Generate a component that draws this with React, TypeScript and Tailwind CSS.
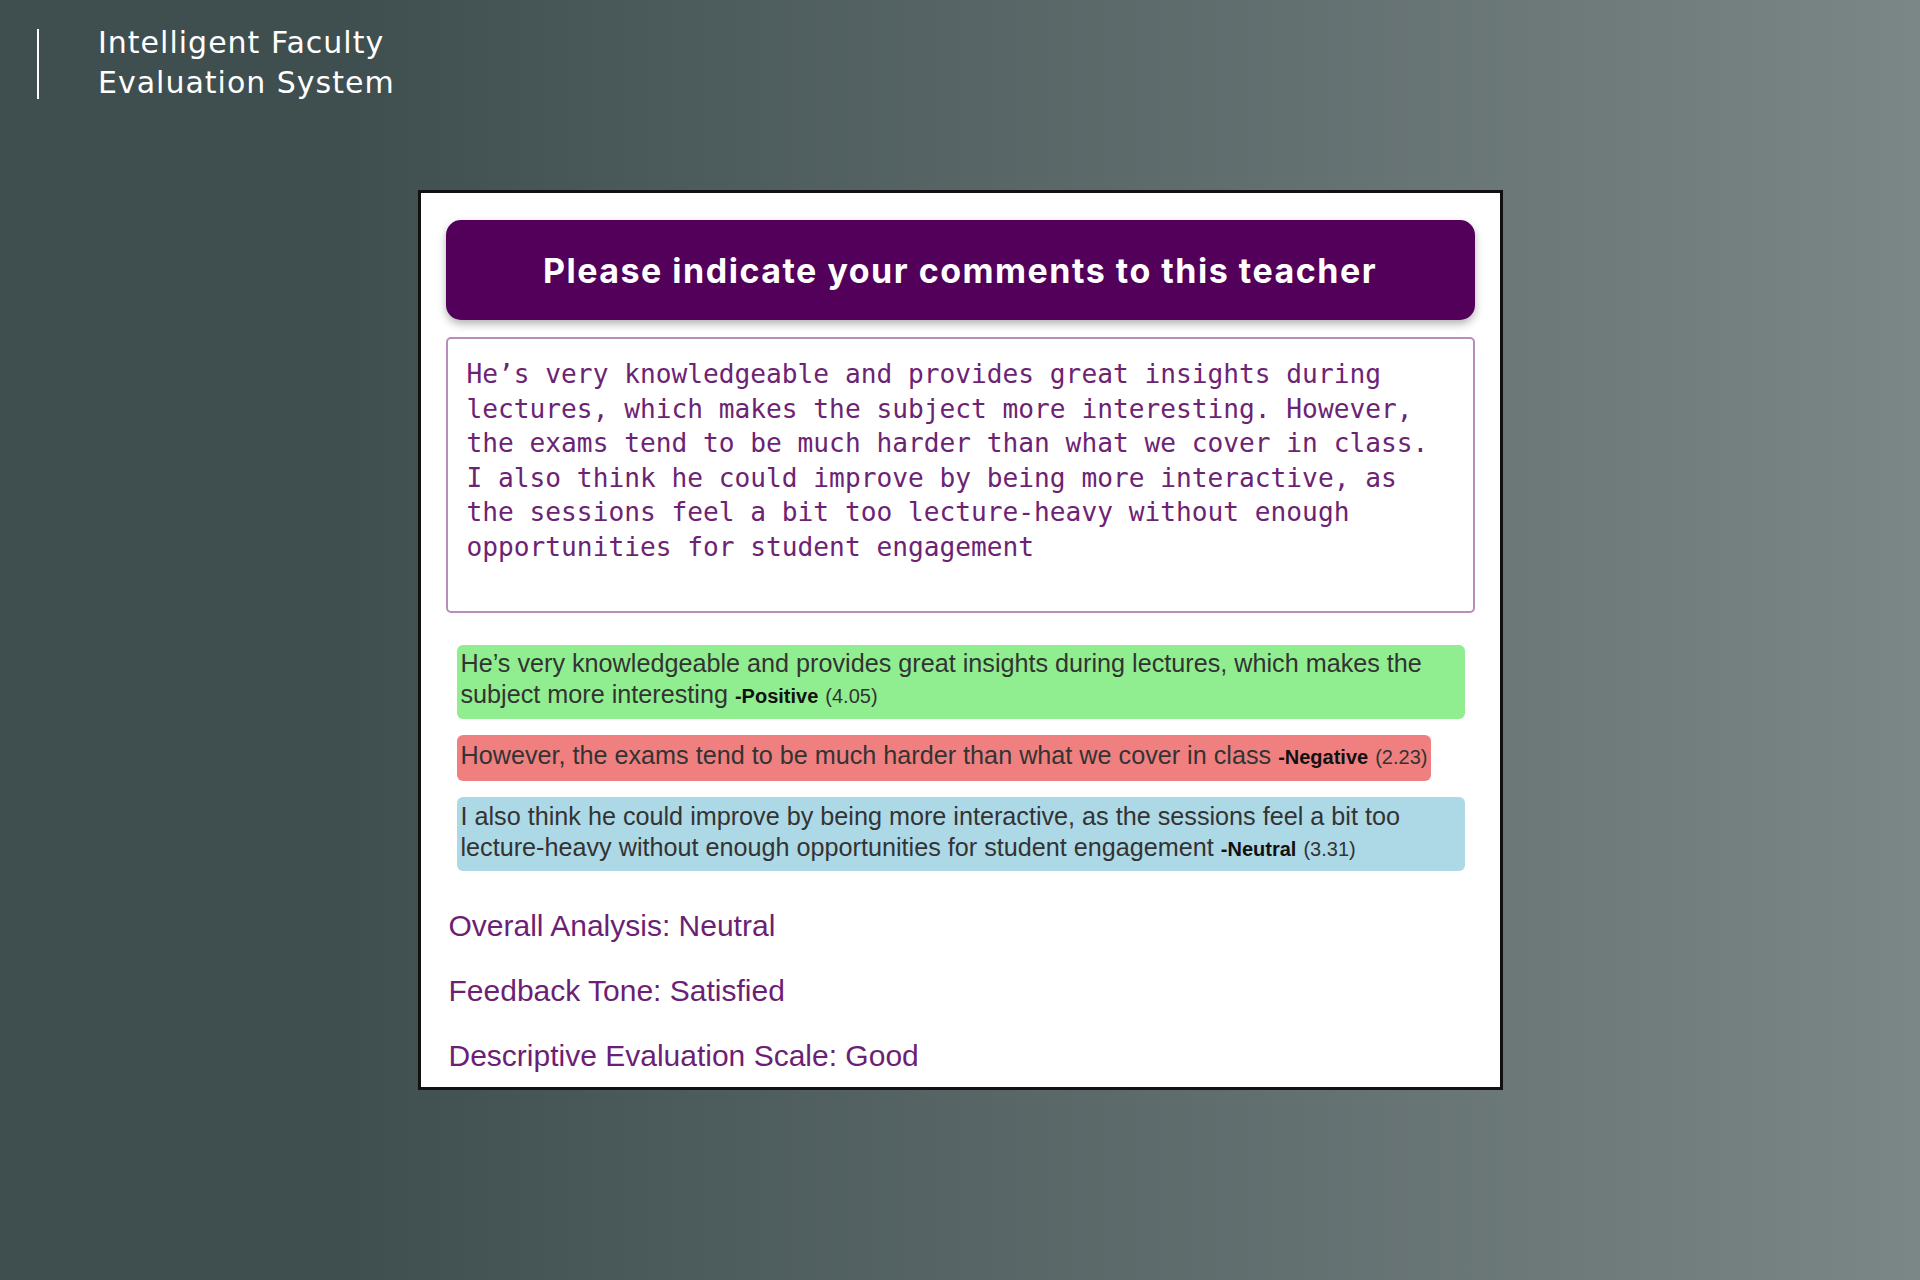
import React from 'react';

const comment =
  "He’s very knowledgeable and provides great insights during lectures, which makes the subject more interesting. However, the exams tend to be much harder than what we cover in class. I also think he could improve by being more interactive, as the sessions feel a bit too lecture-heavy without enough opportunities for student engagement";

const sentences = [
  {
    text: "He’s very knowledgeable and provides great insights during lectures, which makes the subject more interesting",
    label: "Positive",
    score: "4.05",
    cls: "bg-[#90ee90] pt-[3px] pb-[9px]",
  },
  {
    text: "However, the exams tend to be much harder than what we cover in class",
    label: "Negative",
    score: "2.23",
    cls: "bg-[#f08080] pt-[5px] pb-[10px]",
  },
  {
    text: "I also think he could improve by being more interactive, as the sessions feel a bit too lecture-heavy without enough opportunities for student engagement",
    label: "Neutral",
    score: "3.31",
    cls: "bg-[#add8e6] pt-[4px] pb-[8px]",
  },
];

const summary = [
  "Overall Analysis: Neutral",
  "Feedback Tone: Satisfied",
  "Descriptive Evaluation Scale: Good",
];

const App = () => {
  return (
    <div className="min-h-[1280px] w-full pt-[29px] bg-[linear-gradient(to_right,#3f4f50_18%,#7b8686_100%)]">
      {/* top brand */}
      <div className="flex items-start h-[70px] pl-[37px]">
        <div className="w-[2px] h-[70px] bg-white" />
        <div className="ml-[59px] -mt-[6px] text-white text-[30px] leading-[40px] font-['DejaVu_Sans',sans-serif] tracking-[1px]">
          <div>Intelligent Faculty</div>
          <div>Evaluation System</div>
        </div>
      </div>

      {/* card */}
      <div className="mx-auto mt-[91px] w-[1085px] h-[900px] bg-white border-[3px] border-[#111] pl-[25px] pr-[25px] pt-[27px]">
        <div className="h-[100px] rounded-[15px] bg-[#52005a] shadow-[0_4px_8px_rgba(0,0,0,0.3)] flex items-center justify-center">
          <h2 className="text-white text-[34px] font-bold font-['Inter',sans-serif] tracking-[1.5px]">
            Please indicate your comments to this teacher
          </h2>
        </div>

        <div className="mt-[17px] h-[276px] border-2 border-[#b98cbc] rounded-[5px] pl-[19px] pr-[30px] pt-[18px]">
          <p className="text-[26.2px] leading-[34.5px] text-[#6d2374] font-['DejaVu_Sans_Mono',monospace]">
            {comment}
          </p>
        </div>

        <div className="mt-[32px] ml-[11px] w-[1008px] flex flex-col items-start gap-[16px] font-['Liberation_Sans',Arial,sans-serif]">
          {sentences.map((s) => (
            <div
              key={s.label}
              className={`${s.cls} rounded-[6px] pl-[4px] pr-[4px] text-[25.2px] leading-[31px] text-[#333] max-w-full`}
            >
              {s.text}{' '}
              <span className="text-[20px] leading-none font-bold text-[#111]">-{s.label}</span>{' '}
              <span className="text-[20px] leading-none">({s.score})</span>
            </div>
          ))}
        </div>

        <div className="mt-[39px] ml-[3px] flex flex-col gap-[33px] font-['Liberation_Sans',Arial,sans-serif] text-[30px] leading-[32px] text-[#6c1f74]">
          {summary.map((line) => (
            <div key={line}>{line}</div>
          ))}
        </div>
      </div>
    </div>
  );
};

export default App;
